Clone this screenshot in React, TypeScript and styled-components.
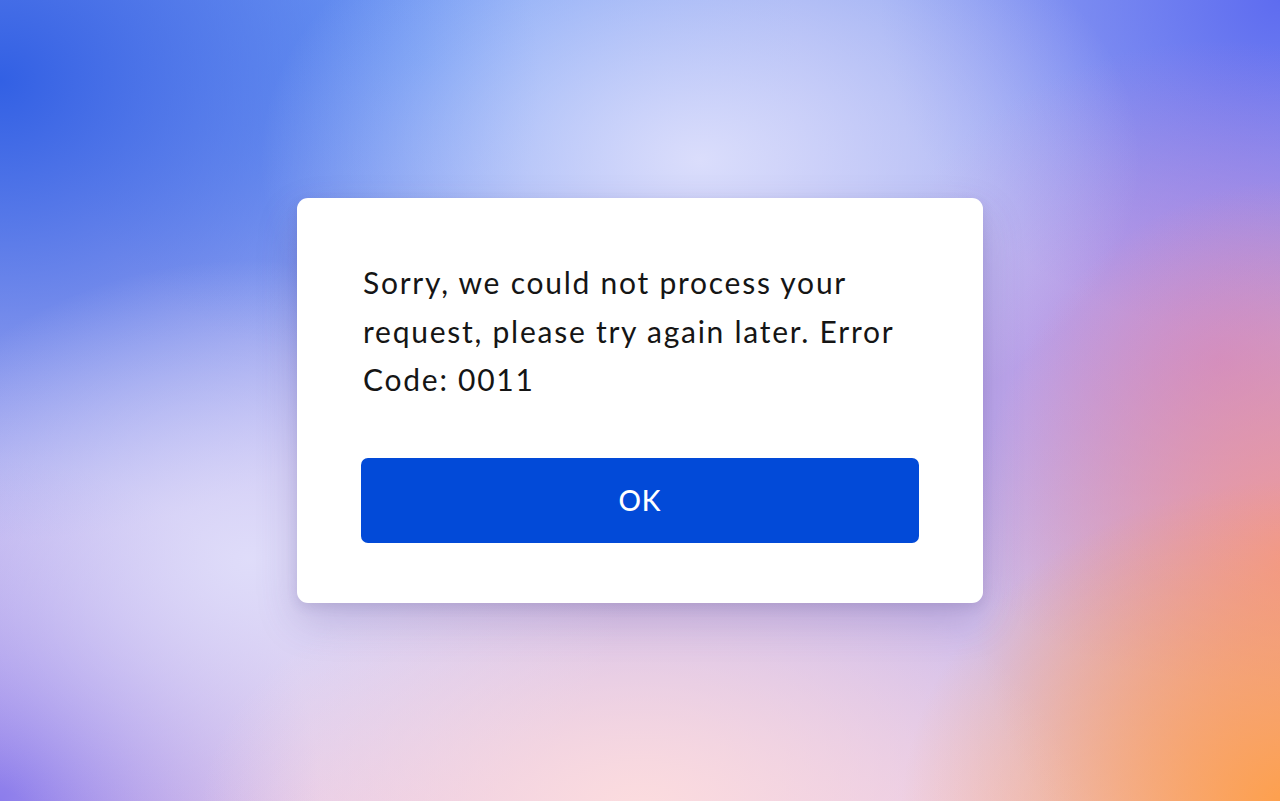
import React from "react";
import styled, { createGlobalStyle } from "styled-components";

const GlobalStyle = createGlobalStyle`
  html, body {
    margin: 0;
    padding: 0;
    height: 100%;
  }
  body {
    font-family: "Lato", "Open Sans", "Liberation Sans", sans-serif;
    -webkit-font-smoothing: antialiased;
  }
  #root { height: 100%; }
`;

const Backdrop = styled.main`
  width: 100%;
  height: 801px;
  display: flex;
  align-items: flex-start;
  justify-content: center;
  padding-top: 198px;
  box-sizing: border-box;
  overflow: hidden;
  background:
    radial-gradient(ellipse 440px 300px at 700px 160px, rgba(222, 224, 252, 0.95), rgba(222, 224, 252, 0) 100%),
    radial-gradient(ellipse 400px 340px at 1300px 820px, rgba(255, 158, 68, 1), rgba(255, 158, 68, 0) 100%),
    radial-gradient(ellipse 440px 260px at 640px 810px, rgba(252, 220, 222, 1), rgba(252, 220, 222, 0) 100%),
    radial-gradient(ellipse 320px 380px at 1290px 560px, rgba(244, 150, 140, 0.9), rgba(244, 150, 140, 0) 100%),
    radial-gradient(ellipse 360px 320px at 1220px 360px, rgba(196, 128, 214, 0.8), rgba(196, 128, 214, 0) 100%),
    radial-gradient(ellipse 380px 300px at 250px 560px, rgba(224, 222, 250, 0.95), rgba(224, 222, 250, 0) 100%),
    radial-gradient(ellipse 320px 340px at 0px 800px, rgba(140, 125, 236, 1), rgba(140, 125, 236, 0) 100%),
    radial-gradient(ellipse 540px 460px at 0px 80px, rgba(50, 96, 228, 1), rgba(50, 96, 228, 0) 100%),
    radial-gradient(ellipse 400px 340px at 1280px 0px, rgba(94, 108, 240, 1), rgba(94, 108, 240, 0) 100%),
    radial-gradient(ellipse 380px 320px at 420px 60px, rgba(110, 160, 248, 0.9), rgba(110, 160, 248, 0) 100%),
    linear-gradient(180deg, #95a8f2 0%, #bbb6f2 55%, #e6c8e6 100%);
`;

const Dialog = styled.section`
  width: 686px;
  box-sizing: border-box;
  background: #ffffff;
  border-radius: 11px;
  padding: 60px 64px 60px 64px;
  display: flex;
  flex-direction: column;
  gap: 54px;
  box-shadow: 0 18px 40px rgba(90, 70, 140, 0.22), 0 4px 12px rgba(60, 50, 110, 0.12);
`;

const Message = styled.p`
  margin: 0;
  padding-left: 2px;
  font-size: 30px;
  line-height: 48.5px;
  color: #151515;
  font-weight: 400;
  letter-spacing: 1.75px;
`;

const OkButton = styled.button`
  height: 85px;
  width: 100%;
  border: none;
  border-radius: 7px;
  background: #024ad8;
  color: #ffffff;
  font-family: inherit;
  font-size: 28px;
  font-weight: 500;
  letter-spacing: 1px;
  cursor: pointer;
`;

export default function App() {
  return (
    <>
      <GlobalStyle />
      <Backdrop>
        <Dialog role="alertdialog">
          <Message>
            Sorry, we could not process your request, please try again later. Error Code: 0011
          </Message>
          <OkButton>OK</OkButton>
        </Dialog>
      </Backdrop>
    </>
  );
}
